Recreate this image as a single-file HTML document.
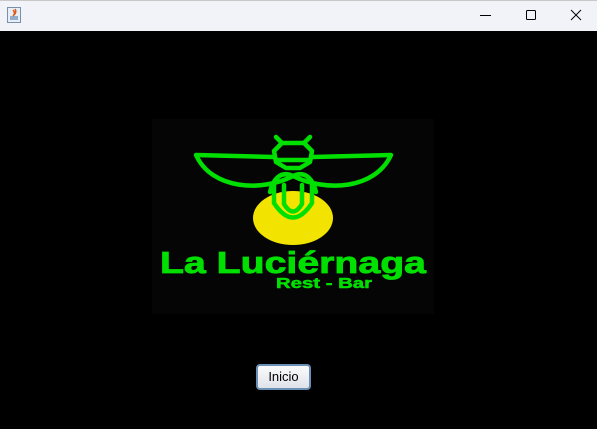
<!DOCTYPE html>
<html><head><style>
body{margin:0;width:597px;height:429px;background:#000;overflow:hidden;font-family:"Liberation Sans",sans-serif;position:relative}
.tb{position:absolute;left:0;top:0;width:597px;height:31px;background:#f2f3f8;border-top:1px solid #c8c8c8;box-sizing:border-box}
.logo{position:absolute;left:152px;top:119px;width:282px;height:195px;background:#050505}
.btn{position:absolute;left:256px;top:364px;width:55px;height:26px;box-sizing:border-box;border:2px solid #6a8fb4;border-radius:4px;background:linear-gradient(#fbfbfc,#dfe3ea);font-size:13px;text-align:center;line-height:22px;color:#000}
</style></head><body>
<div class="tb">
<svg width="597" height="31" style="position:absolute;left:0;top:-1px">
<rect x="7.5" y="7.5" width="13" height="15" fill="#e8eef5" stroke="#7a8fa8"/>
<path d="M13 10 q3 3 0 6 M15 9 q2 3 -1 6" stroke="#e05a1a" fill="none" stroke-width="1.5"/>
<path d="M10 17h8M10 19h8" stroke="#3a6ea5"/>
<path d="M480 15.5h11" stroke="#000"/>
<rect x="526.5" y="10.5" width="9" height="9" rx="1" fill="none" stroke="#000"/>
<path d="M571 10l10 10M581 10l-10 10" stroke="#000"/>
</svg>
</div>
<div class="logo"></div>
<svg width="597" height="429" style="position:absolute;left:0;top:0">
<ellipse cx="293" cy="218" rx="40" ry="27" fill="#f2e400"/>
<g stroke="#00e000" stroke-width="4.5" fill="none" stroke-linejoin="round" stroke-linecap="round">
<path d="M196 155 L273 157 M196 155 C212 190 262 192 293 176 C306 170 313 180 316 192"/>
<path d="M391 155 L313 157 M391 155 C375 190 325 192 293 176 C280 170 273 180 270 192"/>
<path d="M274 151 L282 143 L304 143 L312 151 L310 162 L300 168 L286 168 L276 162 Z"/>
<path d="M276 160 H310"/>
<path d="M282 143 L276 137 M304 143 L310 137"/>
<path d="M274 182 L274 203 Q293 232 312 203 L312 182"/>
<path d="M284 185 L284 204 Q293 219 302 204 L302 185"/>
</g>
<text x="160" y="273" font-family="Liberation Sans" font-weight="bold" font-size="31" fill="#00e000" stroke="#00e000" stroke-width="0.8" textLength="266" lengthAdjust="spacingAndGlyphs">La Luciérnaga</text>
<text x="276" y="288" font-family="Liberation Sans" font-weight="bold" font-size="15" fill="#00e000" stroke="#00e000" stroke-width="0.5" textLength="96" lengthAdjust="spacingAndGlyphs">Rest - Bar</text>
</svg>
<div class="btn">Inicio</div>
</body></html>
